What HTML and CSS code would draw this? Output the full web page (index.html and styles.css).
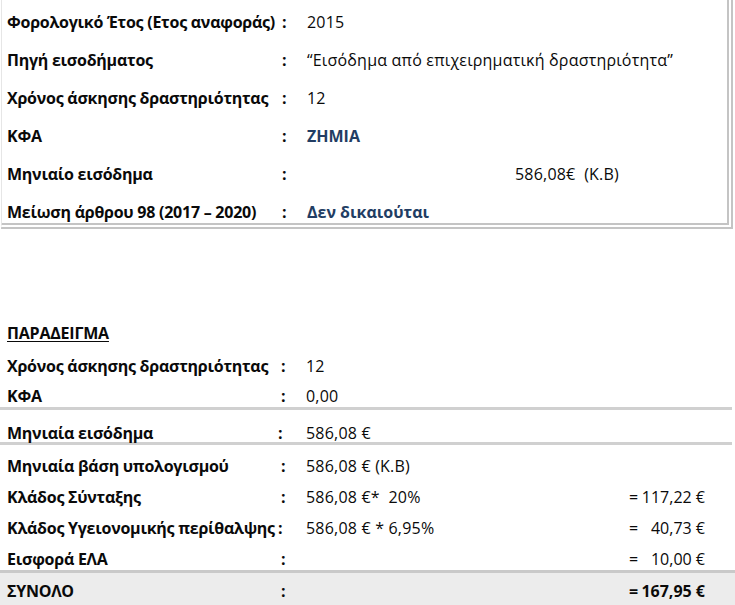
FILE: index.html
```html
<!DOCTYPE html>
<html lang="el">
<head>
<meta charset="utf-8">
<title>Παράδειγμα εισφορών</title>
<link rel="stylesheet" href="styles.css">
</head>
<body>
<section class="box">
  <div class="info-row"><span class="label">Φορολογικό Έτος (Ετος αναφοράς)</span><span class="colon">:</span><span class="value">2015</span></div>
  <div class="info-row"><span class="label">Πηγή εισοδήματος</span><span class="colon">:</span><span class="value">“Εισόδημα από επιχειρηματική δραστηριότητα”</span></div>
  <div class="info-row"><span class="label">Χρόνος άσκησης δραστηριότητας</span><span class="colon">:</span><span class="value">12</span></div>
  <div class="info-row"><span class="label">ΚΦΑ</span><span class="colon">:</span><span class="value blue">ΖΗΜΙΑ</span></div>
  <div class="info-row"><span class="label">Μηνιαίο εισόδημα</span><span class="colon">:</span><span class="value income">586,08€&nbsp; (Κ.Β)</span></div>
  <div class="info-row"><span class="label">Μείωση άρθρου 98 (2017 – 2020)</span><span class="colon">:</span><span class="value blue">Δεν δικαιούται</span></div>
</section>

<section class="example">
  <h2 class="title">ΠΑΡΑΔΕΙΓΜΑ</h2>
  <div class="row r1"><span class="label">Χρόνος άσκησης δραστηριότητας</span><span class="colon">:</span><span class="value">12</span><span class="result"></span></div>
  <div class="row r2 sep"><span class="label">ΚΦΑ</span><span class="colon">:</span><span class="value">0,00</span><span class="result"></span></div>
  <div class="row r3 sep"><span class="label">Μηνιαία εισόδημα</span><span class="colon shift">:</span><span class="value">586,08 €</span><span class="result"></span></div>
  <div class="row"><span class="label">Μηνιαία βάση υπολογισμού</span><span class="colon">:</span><span class="value">586,08 € (Κ.Β)</span><span class="result"></span></div>
  <div class="row"><span class="label">Κλάδος Σύνταξης</span><span class="colon">:</span><span class="value">586,08 €*&nbsp; 20%</span><span class="result"><span>=</span><span>117,22 €</span></span></div>
  <div class="row"><span class="label">Κλάδος Υγειονομικής περίθαλψης</span><span class="colon shift">:</span><span class="value">586,08 € * 6,95%</span><span class="result"><span>=</span><span>40,73 €</span></span></div>
  <div class="row r7"><span class="label">Εισφορά ΕΛΑ</span><span class="colon">:</span><span class="value"></span><span class="result"><span>=</span><span>10,00 €</span></span></div>
  <div class="row total"><span class="label">ΣΥΝΟΛΟ</span><span class="colon">:</span><span class="value"></span><span class="result"><span>=</span><span>167,95 €</span></span></div>
</section>
</body>
</html>
```
FILE: styles.css
```css
html, body {
  margin: 0;
  padding: 0;
  background: #ffffff;
}

body {
  font-family: "Open Sans", "Noto Sans", sans-serif;
  font-size: 16px;
  color: #0a0a0a;
  overflow: hidden;
}

.label {
  font-weight: 700;
  letter-spacing: -0.25px;
}

.value {
  letter-spacing: 0.2px;
}

.colon {
  font-weight: 700;
}

.box {
  box-sizing: border-box;
  width: 732px;
  margin-left: 1px;
  border-left: 1px solid #e6e6e6;
  border-right: 6px double #c4c4c4;
  border-bottom: 6px double #c4c4c4;
  padding: 12px 0 1px 5px;
  display: flex;
  flex-direction: column;
  gap: 18px;
}

.info-row {
  display: grid;
  grid-template-columns: 275px 25px 1fr;
  line-height: 20px;
  white-space: nowrap;
}

.blue {
  color: #223d63;
  font-weight: 700;
  letter-spacing: 0;
}

.income {
  padding-left: 208px;
}

.example {
  display: flex;
  flex-direction: column;
}

.title {
  margin: 94px 0 0 7px;
  font-size: 16px;
  font-weight: 700;
  line-height: 20px;
  letter-spacing: -0.2px;
  text-decoration: underline;
  text-underline-offset: 2px;
}

.row {
  display: grid;
  grid-template-columns: 274px 25px 1fr 76px;
  line-height: 20px;
  padding: 11px 27px 0 7px;
  margin-right: 3px;
  white-space: nowrap;
}

.row.r1 { padding-top: 13px; }
.row.r2 { padding-top: 10px; padding-bottom: 1px; }
.row.r3 { padding-top: 14px; line-height: 18px; }
.row.r7 { padding-bottom: 1px; }

.sep {
  border-bottom: 3px solid #d0d0d0;
}

.shift {
  position: relative;
  left: -3px;
}

.result {
  display: flex;
  justify-content: space-between;
}

.total {
  margin-right: 0;
  padding: 8px 30px 10px 7px;
  border-top: 3px solid #c9c9c9;
  background: #ececec;
  font-weight: 700;
}
```
